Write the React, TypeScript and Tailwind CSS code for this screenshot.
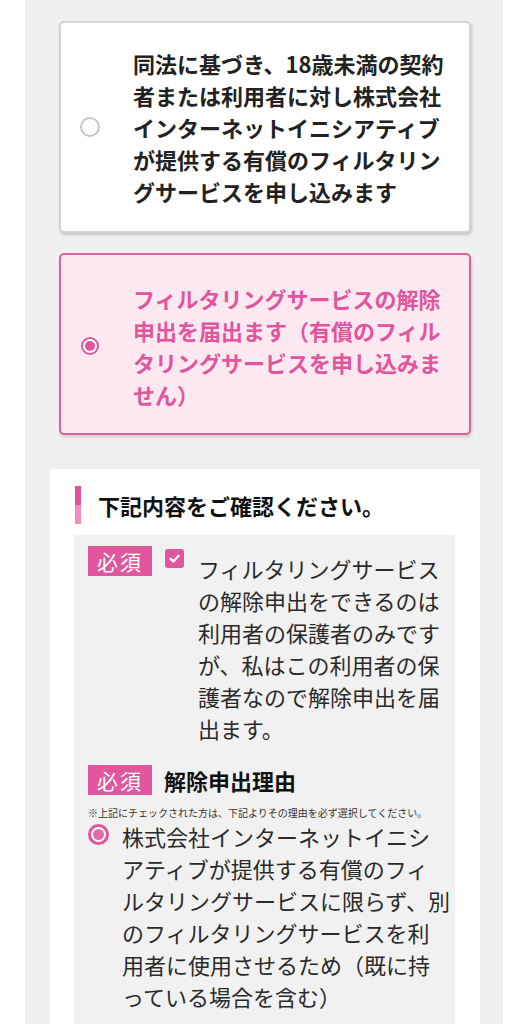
const pink = 'text-[#e0559b]';

function Badge() {
  return (
    <span className="flex h-[30px] w-[64px] shrink-0 items-center justify-center bg-[#e0579d] text-[21px] leading-none tracking-[2px] text-white">
      必須
    </span>
  );
}

export default function App() {
  return (
    <div
      className="flex min-h-screen bg-white"
      style={{ fontFamily: '"Noto Sans CJK JP", "Noto Sans", sans-serif' }}
    >
      <div className="ml-[25px] flex w-[478px] flex-col bg-[#f0f0f0] pt-[21px] pb-10">
        {/* option 1 */}
        <label className="ml-[34px] flex w-[412px] items-center rounded-[5px] border-2 border-[#d4d4d4] bg-white pt-[24px] pb-[24px] pl-[19px] shadow-[1px_2px_3px_rgba(0,0,0,0.18)]">
          <span className="h-[20px] w-[20px] shrink-0 rounded-full border-2 border-[#c6c6c6] bg-white" />
          <span className="ml-[33px] text-[22px] font-bold leading-[32px] text-[#222]">
            同法に基づき、18歳未満の契約
            <br />
            者または利用者に対し株式会社
            <br />
            インターネットイニシアティブ
            <br />
            が提供する有償のフィルタリン
            <br />
            グサービスを申し込みます
          </span>
        </label>

        {/* option 2 */}
        <label className="mt-[20px] ml-[34px] flex w-[412px] items-center rounded-[5px] border-2 border-[#e0619f] bg-[#fce8f1] pt-[27px] pb-[23px] pl-[19px] shadow-[1px_2px_3px_rgba(0,0,0,0.15)]">
          <span className="flex w-[20px] shrink-0 justify-center">
            <span className="flex h-[18px] w-[18px] items-center justify-center rounded-full border-2 border-[#e0559b] bg-white">
              <span className="h-[10px] w-[10px] rounded-full bg-[#e0559b]" />
            </span>
          </span>
          <span className={`ml-[33px] text-[22px] font-bold leading-[32px] ${pink}`}>
            フィルタリングサービスの解除
            <br />
            申出を届出ます（有償のフィル
            <br />
            タリングサービスを申し込みま
            <br />
            せん）
          </span>
        </label>

        {/* confirmation section */}
        <section className="mt-[34px] ml-[25px] w-[430px] bg-white pt-[17px]">
          <div className="ml-[25px] flex h-[38px] items-center">
            <div className="flex h-full w-[6px] flex-col">
              <div className="flex-1 bg-[#e3509a]" />
              <div className="flex-1 bg-[#f08cbf]" />
            </div>
            <h2 className="ml-[17px] text-[22px] font-bold leading-none text-[#111]">
              下記内容をご確認ください。
            </h2>
          </div>

          <div className="mt-[11px] ml-[24px] w-[381px] bg-[#f1f1f1] pt-[11px] pb-10 pl-[14px]">
            <div className="flex items-start">
              <Badge />
              <span className="mt-[3px] ml-[13px] flex h-[19px] w-[19px] shrink-0 items-center justify-center rounded-[3px] bg-[#e0559b]">
                <svg viewBox="0 0 16 16" className="h-[13px] w-[13px]" fill="none">
                  <path d="M3 8.2 6.6 11.6 13 4.6" stroke="white" strokeWidth="2.8" strokeLinecap="round" strokeLinejoin="round" />
                </svg>
              </span>
              <p className="mt-[6px] ml-[14px] whitespace-nowrap text-[22px] leading-[32px] text-[#2a2a2a]">
                フィルタリングサービス
                <br />
                の解除申出をできるのは
                <br />
                利用者の保護者のみです
                <br />
                が、私はこの利用者の保
                <br />
                護者なので解除申出を届
                <br />
                出ます。
              </p>
            </div>

            <div className="mt-[21px] flex items-center">
              <Badge />
              <span className="ml-[12px] text-[22px] font-bold leading-none text-[#111]">解除申出理由</span>
            </div>
            <p className="mt-[11px] whitespace-nowrap text-[10px] leading-[14px] text-[#333]">
              ※上記にチェックされた方は、下記よりその理由を必ず選択してください。
            </p>

            <div className="flex items-start">
              <span className="mt-[4px] flex h-[21px] w-[21px] shrink-0 items-center justify-center rounded-full border-[3px] border-[#e0559b] bg-white">
                <span className="h-[11px] w-[11px] rounded-full bg-[#e66aa8]" />
              </span>
              <p className="ml-[13px] whitespace-nowrap text-[22px] leading-[32px] text-[#2a2a2a]">
                株式会社インターネットイニシ
                <br />
                アティブが提供する有償のフィ
                <br />
                ルタリングサービスに限らず、別
                <br />
                のフィルタリングサービスを利
                <br />
                用者に使用させるため（既に持
                <br />
                っている場合を含む）
              </p>
            </div>
          </div>
        </section>
      </div>
    </div>
  );
}
